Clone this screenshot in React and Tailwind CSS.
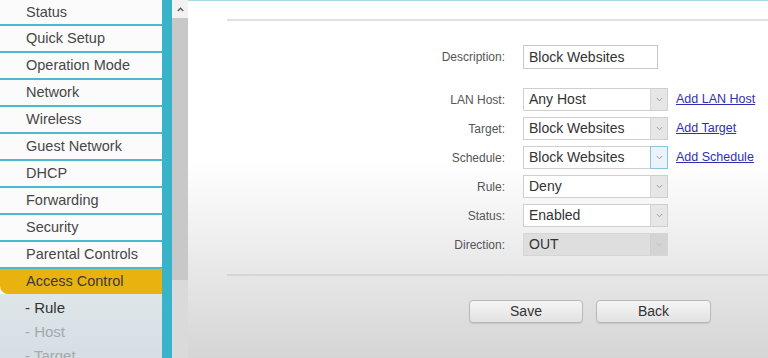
import React from "react";

const F = { fontFamily: '"Liberation Sans", Arial, sans-serif' };

function Chevron({ color = "#a8a8a8" }) {
  return (
    <svg width="7" height="5" viewBox="0 0 7 5">
      <path d="M0.8 1 L3.5 3.8 L6.2 1" fill="none" stroke={color} strokeWidth="1" />
    </svg>
  );
}

function Select({ value, focus, disabled }) {
  return (
    <div
      className={`flex h-[23px] w-[145px] border ${disabled ? "border-[#d6d6d6] bg-[#dedede]" : "border-[#cfcfcf] bg-white"}`}
    >
      <div className="flex flex-1 items-center pl-[5px] text-[14px] text-[#333]">{value}</div>
      <div
        className={`flex w-[17px] items-center justify-center ${
          focus
            ? "border border-[#8cc2de] bg-[#eaf3f9] -my-[1px] -mr-[1px] w-[18px]"
            : disabled
            ? "border-l border-[#d0d0d0] bg-[#d4d4d4]"
            : "border-l border-[#d6d6d6] bg-[#e6e6e6]"
        }`}
      >
        <Chevron color={disabled ? "#c4c4c4" : "#a0a0a0"} />
      </div>
    </div>
  );
}

function Row({ label, children, link }) {
  return (
    <div className="flex h-[23px] items-center">
      <div className="w-[130px] pr-[1px] text-right text-[12px] text-[#555]">{label}</div>
      <div className="ml-[17px]">{children}</div>
      {link && (
        <a className="ml-[8px] text-[12.5px] text-[#2f2fb0] underline" href="#">
          {link}
        </a>
      )}
    </div>
  );
}

export default function App() {
  const items = [
    "Status",
    "Quick Setup",
    "Operation Mode",
    "Network",
    "Wireless",
    "Guest Network",
    "DHCP",
    "Forwarding",
    "Security",
    "Parental Controls",
  ];
  return (
    <div className="flex h-[358px] w-[768px] overflow-hidden bg-white" style={F}>
      {/* Sidebar */}
      <div className="flex w-[162px] shrink-0 flex-col bg-[#fbfbfb]">
        {items.map((t, i) => (
          <div
            key={t}
            className={`flex shrink-0 items-center border-b-2 border-[#4cb9cf] pl-[26px] text-[14.5px] text-[#474747] ${
              i === 0 ? "h-[26px] pt-[1px]" : "h-[27px]"
            }`}
          >
            {t}
          </div>
        ))}
        <div className="flex h-[25px] shrink-0 items-center rounded-bl-[8px] bg-[#e9b30f] pl-[26px] text-[14.5px] text-[#3a3a3a]">
          Access Control
        </div>
        <div className="flex flex-1 flex-col bg-gradient-to-b from-[#dfe6ea] to-[#d3dde2] pt-[2px]">
          <div className="flex h-[24px] shrink-0 items-center pl-[25px] text-[15px] text-[#333]">- Rule</div>
          <div className="flex h-[24px] shrink-0 items-center pl-[25px] text-[15px] text-[#a3a9ad]">- Host</div>
          <div className="flex h-[24px] shrink-0 items-center pl-[25px] text-[15px] text-[#a3a9ad]">- Target</div>
        </div>
      </div>
      {/* teal bar */}
      <div className="w-[10px] shrink-0 bg-[#38b3c9]" />
      {/* scrollbar */}
      <div className="flex w-[16px] shrink-0 flex-col bg-[#dadada]">
        <div className="flex h-[18px] items-center justify-center bg-[#f2f2f2]">
          <svg width="7" height="5" viewBox="0 0 7 5">
            <path d="M0.8 4 L3.5 1.2 L6.2 4" fill="none" stroke="#555" strokeWidth="1.3" />
          </svg>
        </div>
        <div className="h-[262px] bg-[#c8c8c8]" />
      </div>
      {/* content */}
      <div className="flex flex-1 flex-col border-t border-[#a9dbe6] bg-gradient-to-b from-white via-white via-45% to-[#d5d5d5]">
        <div className="ml-[39px] mt-[18px] h-[2px] bg-[#e0e0e0]" />
        <div className="ml-[188px] mt-[24px] flex flex-col">
          <div className="flex h-[24px] items-center">
            <div className="w-[130px] pr-[1px] text-right text-[12px] text-[#555]">Description:</div>
            <div className="ml-[17px] flex h-[24px] w-[135px] items-center border border-[#c8c8c8] bg-white pl-[5px] text-[14px] text-[#333]">
              Block Websites
            </div>
          </div>
          <div className="mt-[19px] flex flex-col gap-[6px]">
            <Row label="LAN Host:" link="Add LAN Host">
              <Select value="Any Host" />
            </Row>
            <Row label="Target:" link="Add Target">
              <Select value="Block Websites" />
            </Row>
            <Row label="Schedule:" link="Add Schedule">
              <Select value="Block Websites" focus />
            </Row>
            <Row label="Rule:">
              <Select value="Deny" />
            </Row>
            <Row label="Status:">
              <Select value="Enabled" />
            </Row>
            <Row label="Direction:">
              <Select value="OUT" disabled />
            </Row>
          </div>
        </div>
        <div className="ml-[39px] mt-[18px] h-[2px] bg-[#d6d6d6]" />
        <div className="ml-[281px] mt-[24px] flex gap-[13px]">
          <button className="h-[23px] w-[114px] rounded-[4px] border border-[#b9b9b9] bg-gradient-to-b from-[#f5f5f5] to-[#e2e2e2] text-[14px] text-[#333] shadow-[0_1px_1px_rgba(0,0,0,0.1)]">
            Save
          </button>
          <button className="h-[23px] w-[115px] rounded-[4px] border border-[#b9b9b9] bg-gradient-to-b from-[#f5f5f5] to-[#e2e2e2] text-[14px] text-[#333] shadow-[0_1px_1px_rgba(0,0,0,0.1)]">
            Back
          </button>
        </div>
      </div>
    </div>
  );
}
